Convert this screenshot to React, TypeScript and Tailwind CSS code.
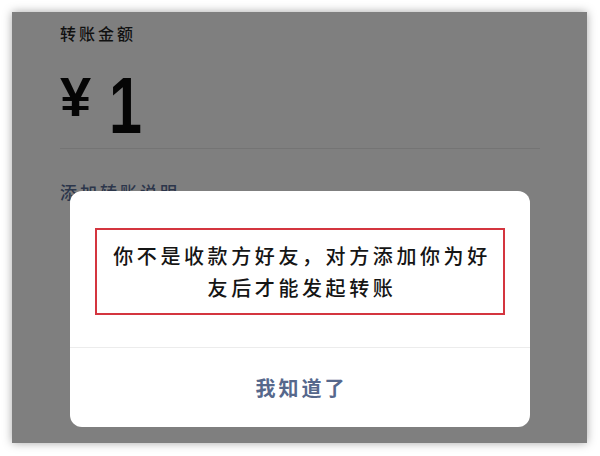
export default function App() {
  const cjk = { fontFamily: '"Noto Sans CJK SC", "Noto Sans", sans-serif' };
  return (
    <div className="w-[600px] h-[456px] bg-white p-3">
      <div
        className="relative w-[575px] h-[431px] bg-[#7f7f7f] shadow-[0_0_9px_rgba(0,0,0,0.35)] pl-[48px] pr-[47px] pt-[9px] flex flex-col"
        style={cjk}
      >
        <div className="text-[16px] leading-[24px] tracking-[3px] text-[#111] font-medium">转账金额</div>
        <div
          className="flex items-start mt-[21px] font-bold text-[#050505]"
          style={{ fontFamily: '"Liberation Sans", Arial, sans-serif' }}
        >
          <span className="text-[56px] leading-none mt-[3px]">¥</span>
          <span className="text-[80px] leading-none ml-[18px] scale-x-[0.74] origin-left inline-block">1</span>
        </div>
        <div className="h-px bg-[#747474] mt-[2px]" />
        <div className="mt-[31px] text-[17px] leading-[24px] tracking-[3px] text-[#2c364b] font-medium">
          添加转账说明
        </div>

        <div className="absolute left-[58px] top-[179px] w-[460px] h-[236px] bg-white rounded-[12px] flex flex-col">
          <div className="h-[156px] px-[25px] pt-[37px]">
            <div className="h-[87px] border-2 border-[#d4353f] flex flex-col items-center justify-center text-[20px] leading-[32px] tracking-[3.6px] text-[#151515] font-medium pl-[4px]">
              <div>你不是收款方好友，对方添加你为好</div>
              <div>友后才能发起转账</div>
            </div>
          </div>
          <div className="h-px bg-[#ececec]" />
          <div className="flex-1 flex items-center justify-center text-[20px] tracking-[3px] font-bold text-[#56688c] pl-[3px]">
            我知道了
          </div>
        </div>
      </div>
    </div>
  );
}
